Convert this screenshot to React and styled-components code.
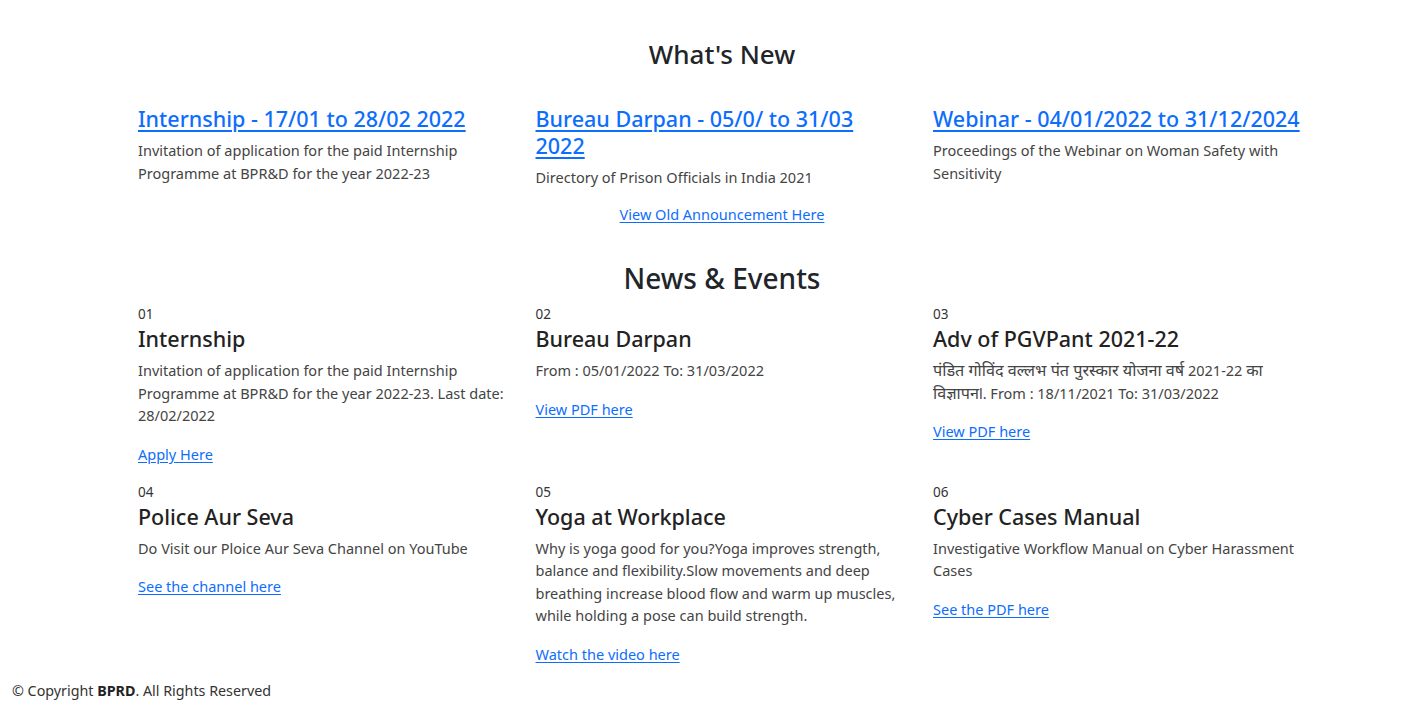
import React from "react";
import styled, { createGlobalStyle } from "styled-components";

const GlobalStyle = createGlobalStyle`
  html, body {
    margin: 0;
    padding: 0;
    background: #fff;
  }
  body {
    font-family: "Noto Sans", "Open Sans", "Liberation Sans", sans-serif;
    color: #212529;
  }
`;

const Page = styled.div`
  width: 1418px;
  min-height: 705px;
  display: flex;
  flex-direction: column;
`;

const Container = styled.section`
  width: 1168px;
  margin-left: 138px;
  padding-top: ${(p) => p.$top || 0}px;
`;

const SectionTitle = styled.h2`
  margin: 0;
  text-align: center;
  font-size: ${(p) => p.$size || 26}px;
  font-weight: 500;
  line-height: 1.2;
  color: #212529;
`;

const Grid = styled.div`
  display: grid;
  grid-template-columns: repeat(3, 370px);
  column-gap: 27.5px;
  row-gap: ${(p) => p.$rowGap || 0}px;
  margin-top: ${(p) => p.$top || 0}px;
`;

const Announcement = styled.div`
  display: flex;
  flex-direction: column;
`;

const AnnLink = styled.a`
  font-size: 21.5px;
  font-weight: 500;
  line-height: 27px;
  color: #0d6efd;
  text-decoration: underline;
  text-underline-offset: 3px;
`;

const Text = styled.p`
  margin: ${(p) => p.$top || 6}px 0 0;
  font-size: 14.5px;
  line-height: 22.5px;
  color: #444;
`;

const Hindi = styled.span`
  font-size: 16.2px;
  line-height: 1;
`;

const Center = styled.div`
  text-align: center;
  margin-top: 14px;
`;

const SmallLink = styled.a`
  font-size: 14.5px;
  line-height: 20px;
  color: #0d6efd;
  text-decoration: underline;
  text-underline-offset: 2px;
`;

const Card = styled.div`
  display: flex;
  flex-direction: column;
  align-items: flex-start;
`;

const Num = styled.span`
  font-size: 13.5px;
  line-height: 18px;
  color: #333;
`;

const CardTitle = styled.h3`
  margin: 2px 0 0;
  font-size: 21.5px;
  font-weight: 500;
  line-height: 28px;
  color: #222;
`;

const CardLink = styled(SmallLink)`
  margin-top: 17px;
`;

const Footer = styled.footer`
  margin-top: auto;
  padding: 0 0 4px 12px;
  font-size: 14.3px;
  line-height: 20px;
  color: #333;

  b {
    color: #222;
    font-weight: 700;
  }
`;

const announcements = [
  {
    title: "Internship - 17/01 to 28/02 2022",
    text: "Invitation of application for the paid Internship Programme at BPR&D for the year 2022-23",
  },
  {
    title: "Bureau Darpan - 05/0/ to 31/03 2022",
    text: "Directory of Prison Officials in India 2021",
  },
  {
    title: "Webinar - 04/01/2022 to 31/12/2024",
    text: "Proceedings of the Webinar on Woman Safety with Sensitivity",
  },
];

const events = [
  {
    num: "01",
    title: "Internship",
    text: "Invitation of application for the paid Internship Programme at BPR&D for the year 2022-23. Last date: 28/02/2022",
    link: "Apply Here",
  },
  {
    num: "02",
    title: "Bureau Darpan",
    text: "From : 05/01/2022 To: 31/03/2022",
    link: "View PDF here",
  },
  {
    num: "03",
    title: "Adv of PGVPant 2021-22",
    text: (
      <>
        <Hindi lang="hi">पंडित गोविंद वल्लभ पंत पुरस्कार योजना वर्ष</Hindi> 2021-22{" "}
        <Hindi lang="hi">का विज्ञापन</Hindi>l. From : 18/11/2021 To: 31/03/2022
      </>
    ),
    link: "View PDF here",
  },
  {
    num: "04",
    title: "Police Aur Seva",
    text: "Do Visit our Ploice Aur Seva Channel on YouTube",
    link: "See the channel here",
  },
  {
    num: "05",
    title: "Yoga at Workplace",
    text: "Why is yoga good for you?Yoga improves strength, balance and flexibility.Slow movements and deep breathing increase blood flow and warm up muscles, while holding a pose can build strength.",
    link: "Watch the video here",
  },
  {
    num: "06",
    title: "Cyber Cases Manual",
    text: "Investigative Workflow Manual on Cyber Harassment Cases",
    link: "See the PDF here",
  },
];

export default function App() {
  return (
    <Page>
      <GlobalStyle />
      <Container $top={39}>
        <SectionTitle $size={26}>What's New</SectionTitle>
        <Grid $top={35}>
          {announcements.map((a) => (
            <Announcement key={a.title}>
              <div>
                <AnnLink href="#">{a.title}</AnnLink>
              </div>
              <Text $top={7}>{a.text}</Text>
            </Announcement>
          ))}
        </Grid>
        <Center>
          <SmallLink href="#">View Old Announcement Here</SmallLink>
        </Center>
      </Container>

      <Container $top={37}>
        <SectionTitle $size={28}>News &amp; Events</SectionTitle>
        <Grid $top={10} $rowGap={19}>
          {events.map((e) => (
            <Card key={e.num}>
              <Num>{e.num}</Num>
              <CardTitle>{e.title}</CardTitle>
              <Text $top={6}>{e.text}</Text>
              <CardLink href="#">{e.link}</CardLink>
            </Card>
          ))}
        </Grid>
      </Container>

      <Footer>
        © Copyright <b>BPRD</b>. All Rights Reserved
      </Footer>
    </Page>
  );
}
